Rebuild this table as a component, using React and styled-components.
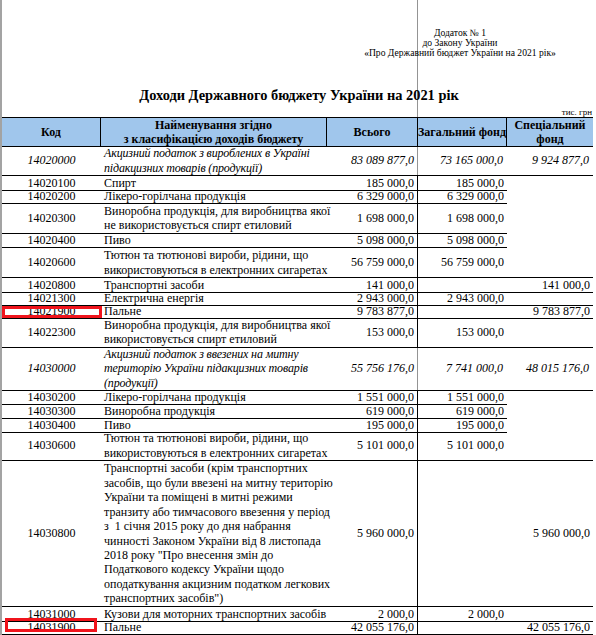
import React from 'react';
import styled, { createGlobalStyle } from 'styled-components';

const GlobalStyle = createGlobalStyle`
  html, body { margin: 0; padding: 0; background: #fff; }
  body { font-family: "Liberation Serif", "Times New Roman", serif; color: #000; }
  #root { width: 596px; }
`;

const COLS = '99px 226px 91px 89px 86px';

const Page = styled.div`
  position: relative;
  width: 596px;
  height: 635px;
  overflow: hidden;
  box-sizing: border-box;
  border-left: 2px solid #a3a3a3;
  background: #fff;
`;

const Annex = styled.div`
  padding: 28px 0 0 322px;
  text-align: center;
  font-size: 9.6px;
  line-height: 10px;
`;

const Title = styled.h1`
  margin: 27px 0 0;
  text-align: center;
  font-size: 14.4px;
  line-height: 20px;
  font-weight: bold;
`;

const Unit = styled.div`
  margin-top: 2px;
  padding-right: 4px;
  text-align: right;
  font-size: 9px;
  line-height: 10px;
`;

const Table = styled.div`
  width: 591px;
  border-top: 1px solid #000;
`;

const Row = styled.div`
  display: grid;
  grid-template-columns: ${COLS};
  height: ${p => p.$h}px;
`;

const HeadCell = styled.div`
  display: flex;
  align-items: center;
  justify-content: center;
  text-align: center;
  box-sizing: border-box;
  background: #a0c6ec;
  border-bottom: 1px solid #000;
  border-right: ${p => (p.$last ? 'none' : '1px solid #000')};
  font-weight: bold;
  font-size: 12px;
  line-height: 14px;
`;

const Cell = styled.div`
  position: relative;
  display: flex;
  align-items: center;
  justify-content: ${p => p.$justify || 'flex-start'};
  box-sizing: border-box;
  padding: 0 ${p => p.$pr ?? 0}px 0 ${p => p.$pl ?? 0}px;
  border-bottom: 1px solid ${p => (p.$line ? '#000' : 'transparent')};
  border-right: ${p => (p.$divider ? '1px solid #000' : 'none')};
  font-size: 12px;
  line-height: 14.4px;
  font-style: ${p => (p.$italic ? 'italic' : 'normal')};
  white-space: nowrap;
`;

const Lines = styled.div`
  display: flex;
  flex-direction: column;
  letter-spacing: ${p => (p.$italic ? '-0.15px' : '0')};
`;

const Line = styled.span`
  white-space: pre;
`;

const Mark = styled.span`
  position: absolute;
  top: ${p => p.$top}px;
  left: ${p => p.$left}px;
  width: ${p => p.$w}px;
  height: ${p => p.$h}px;
  box-sizing: border-box;
  border: 3px solid #f0141c;
  pointer-events: none;
`;

const PageBreak = styled.div`
  position: absolute;
  top: 0;
  bottom: 0;
  left: 415px;
  width: 1px;
  background: rgba(0, 0, 0, 0.42);
`;

const rows = [
  { c: '14020000', n: ['Акцизний податок з вироблених в Україні', 'підакцизних товарів (продукції)'], a: '83 089 877,0', g: '73 165 000,0', s: '9 924 877,0', it: true, h: 30 },
  { c: '14020100', n: ['Спирт'], a: '185 000,0', g: '185 000,0', h: 13 },
  { c: '14020200', n: ['Лікеро-горілчана продукція'], a: '6 329 000,0', g: '6 329 000,0', h: 15 },
  { c: '14020300', n: ['Виноробна продукція, для виробництва якої', 'не використовується спирт етиловий'], a: '1 698 000,0', g: '1 698 000,0', h: 29 },
  { c: '14020400', n: ['Пиво'], a: '5 098 000,0', g: '5 098 000,0', h: 15 },
  { c: '14020600', n: ['Тютюн та тютюнові вироби, рідини, що', 'використовуються в електронних сигаретах'], a: '56 759 000,0', g: '56 759 000,0', h: 30 },
  { c: '14020800', n: ['Транспортні засоби'], a: '141 000,0', s: '141 000,0', h: 13 },
  { c: '14021300', n: ['Електрична енергія'], a: '2 943 000,0', g: '2 943 000,0', h: 13 },
  { c: '14021900', n: ['Пальне'], a: '9 783 877,0', s: '9 783 877,0', h: 14, mark: { top: 2, left: 0, w: 100, h: 12 } },
  { c: '14022300', n: ['Виноробна продукція, для виробництва якої', 'використовується спирт етиловий'], a: '153 000,0', g: '153 000,0', h: 29 },
  { c: '14030000', n: ['Акцизний податок з ввезених на митну', 'територію України підакцизних товарів', '(продукції)'], a: '55 756 176,0', g: '7 741 000,0', s: '48 015 176,0', it: true, h: 43 },
  { c: '14030200', n: ['Лікеро-горілчана продукція'], a: '1 551 000,0', g: '1 551 000,0', h: 14 },
  { c: '14030300', n: ['Виноробна продукція'], a: '619 000,0', g: '619 000,0', h: 14 },
  { c: '14030400', n: ['Пиво'], a: '195 000,0', g: '195 000,0', h: 13 },
  { c: '14030600', n: ['Тютюн та тютюнові вироби, рідини, що', 'використовуються в електронних сигаретах'], a: '5 101 000,0', g: '5 101 000,0', h: 30 },
  {
    c: '14030800',
    n: [
      'Транспортні засоби (крім транспортних',
      'засобів, що були ввезені на митну територію',
      'України та поміщені в митні режими',
      'транзиту або тимчасового ввезення у період',
      'з  1 січня 2015 року до дня набрання',
      'чинності Законом України від 8 листопада',
      '2018 року "Про внесення змін до',
      'Податкового кодексу України щодо',
      'оподаткування акцизним податком легкових',
      'транспортних засобів")',
    ],
    a: '5 960 000,0',
    s: '5 960 000,0',
    h: 146,
  },
  { c: '14031000', n: ['Кузови для моторних транспортних засобів'], a: '2 000,0', g: '2 000,0', h: 13 },
  { c: '14031900', n: ['Пальне'], a: '42 055 176,0', s: '42 055 176,0', h: 15, mark: { top: -2, left: 3, w: 92, h: 14 } },
];

export default function App() {
  return (
    <>
      <GlobalStyle />
      <Page>
        <Annex>
          <div>Додаток № 1</div>
          <div>до Закону України</div>
          <div>«Про Державний бюджет України на 2021 рік»</div>
        </Annex>
        <Title>Доходи Державного бюджету України на 2021 рік</Title>
        <Unit>тис. грн</Unit>
        <Table>
          <Row $h={28}>
            <HeadCell>Код</HeadCell>
            <HeadCell>
              Найменування згідно
              <br />з класифікацією доходів бюджету
            </HeadCell>
            <HeadCell>Всього</HeadCell>
            <HeadCell>Загальний фонд</HeadCell>
            <HeadCell $last>
              Спеціальний
              <br />
              фонд
            </HeadCell>
          </Row>
          {rows.map((r, i) => {
            const next = rows[i + 1];
            const specLine = Boolean(r.s || (next && next.s));
            const pr = r.it ? 4 : 3;
            return (
              <Row key={r.c} $h={r.h}>
                <Cell $justify="center" $line $italic={r.it}>
                  {r.c}
                  {r.mark && <Mark $top={r.mark.top} $left={r.mark.left} $w={r.mark.w} $h={r.mark.h} />}
                </Cell>
                <Cell $pl={3} $line $italic={r.it}>
                  <Lines $italic={r.it}>
                    {r.n.map((l, k) => (
                      <Line key={k}>{l}</Line>
                    ))}
                  </Lines>
                </Cell>
                <Cell $justify="flex-end" $pr={pr} $line $italic={r.it} $divider={!r.it}>
                  {r.a}
                </Cell>
                <Cell $justify="flex-end" $pr={pr} $line $italic={r.it}>
                  {r.g || ''}
                </Cell>
                <Cell $justify="flex-end" $pr={pr} $line={specLine} $italic={r.it}>
                  {r.s || ''}
                </Cell>
              </Row>
            );
          })}
        </Table>
        <PageBreak />
      </Page>
    </>
  );
}
